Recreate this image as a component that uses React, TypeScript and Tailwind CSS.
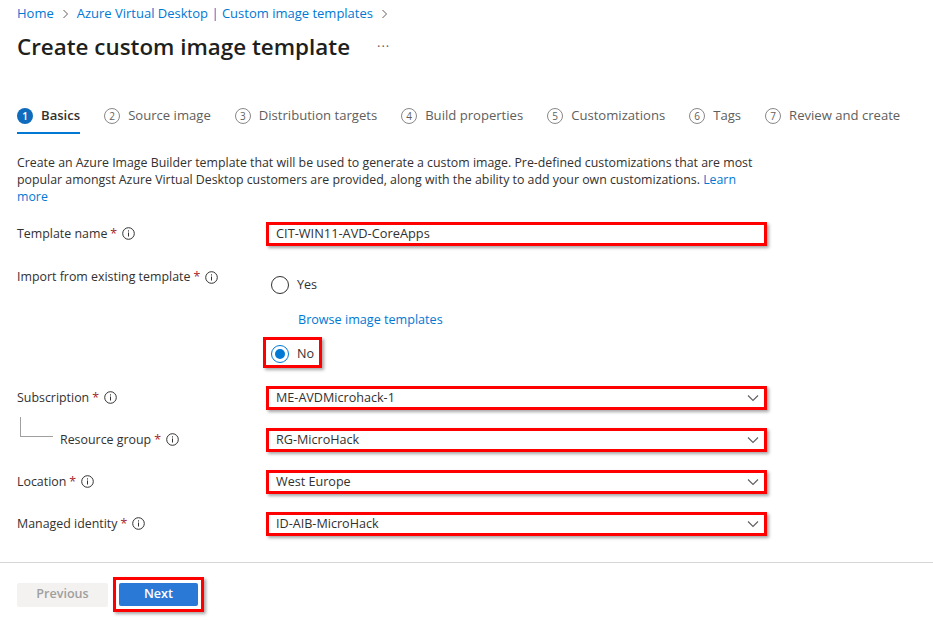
import React from "react";

const font = { fontFamily: '"Segoe UI", "Open Sans", sans-serif' };

const tabs = [
  "Basics",
  "Source image",
  "Distribution targets",
  "Build properties",
  "Customizations",
  "Tags",
  "Review and create",
];

const InfoIcon = () => (
  <svg width="13" height="13" viewBox="0 0 13 13" className="ml-[5px] shrink-0">
    <circle cx="6.5" cy="6.5" r="5.8" fill="none" stroke="#323130" strokeWidth="1" />
    <rect x="6" y="5.5" width="1" height="4" fill="#323130" />
    <rect x="6" y="3.3" width="1" height="1.2" fill="#323130" />
  </svg>
);

const Label = ({ text }: { text: string }) => (
  <div className="flex items-center whitespace-nowrap text-[12.4px] text-[#323130]">
    <span>{text}</span>
    <span className="ml-[3px] text-[#a4262c]">*</span>
    <InfoIcon />
  </div>
);

const Chevron = () => (
  <svg width="12" height="8" viewBox="0 0 12 8">
    <path d="M1 1.5 L6 6.5 L11 1.5" fill="none" stroke="#605e5c" strokeWidth="1.1" />
  </svg>
);

const Dropdown = ({ value }: { value: string }) => (
  <div className="flex h-[24px] w-[501px] items-center justify-between border-[3px] border-[#ff0000] bg-white pl-[7px] pr-[5px] text-[12.6px] text-[#323130] shadow-[2px_2px_3px_rgba(0,0,0,0.35)]">
    <span>{value}</span>
    <Chevron />
  </div>
);

const Crumb = () => (
  <svg width="7" height="10" viewBox="0 0 7 10">
    <path d="M1.5 1 L5.5 5 L1.5 9" fill="none" stroke="#605e5c" strokeWidth="1" />
  </svg>
);

export default function App() {
  return (
    <div className="min-h-[621px] w-[933px] bg-white text-[#323130]" style={font}>
      <div className="pl-[17px]">
        {/* breadcrumb */}
        <div className="mt-[6px] flex h-[16px] items-center text-[13px] text-[#0078d4]">
          <span>Home</span>
          <span className="mx-[8px]">
            <Crumb />
          </span>
          <span>Azure Virtual Desktop | Custom image templates</span>
          <span className="ml-[8px]">
            <Crumb />
          </span>
        </div>

        {/* title */}
        <div className="mt-[9px] flex h-[32px] items-center">
          <h1 className="text-[22.4px] font-semibold leading-[32px] text-[#201f1e]">
            Create custom image template
          </h1>
          <span className="ml-[27px] text-[13px] tracking-[1px] text-[#605e5c]">···</span>
        </div>

        {/* tabs */}
        <div className="mt-[41px] flex gap-[24px] whitespace-nowrap">
          {tabs.map((t, i) => (
            <div
              key={t}
              className={
                i === 0
                  ? "flex h-[30px] items-start border-b-2 border-[#0078d4] pb-[4px]"
                  : "flex h-[30px] items-start pb-[4px]"
              }
            >
              <div className="flex h-[24px] items-center">
                {i === 0 ? (
                  <span className="flex h-[16px] w-[16px] items-center justify-center rounded-full bg-[#0f6cbd] text-[10px] font-semibold text-white">
                    {i + 1}
                  </span>
                ) : (
                  <span className="flex h-[16px] w-[16px] items-center justify-center rounded-full border border-[#8a8886] text-[10px] text-[#605e5c]">
                    {i + 1}
                  </span>
                )}
                <span
                  className={
                    i === 0
                      ? "ml-[8px] text-[13.1px] font-semibold text-[#323130]"
                      : "ml-[8px] text-[13.1px] text-[#605e5c]"
                  }
                >
                  {t}
                </span>
              </div>
            </div>
          ))}
        </div>

        {/* description */}
        <div className="mt-[20px] whitespace-nowrap text-[12.35px] leading-[17px] text-[#323130]">
          <div>
            Create an Azure Image Builder template that will be used to generate a custom image.
            Pre-defined customizations that are most
          </div>
          <div>
            popular amongst Azure Virtual Desktop customers are provided, along with the ability to
            add your own customizations. <span className="text-[#0078d4]">Learn</span>
          </div>
          <div className="text-[#0078d4]">more</div>
        </div>

        {/* template name */}
        <div className="mt-[17px] flex h-[24px] items-center">
          <div className="w-[249px]">
            <Label text="Template name" />
          </div>
          <div className="flex h-[24px] w-[501px] items-center border-[3px] border-[#ff0000] bg-white pl-[7px] text-[12.8px] shadow-[2px_2px_3px_rgba(0,0,0,0.35)]">
            CIT-WIN11-AVD-CoreApps
          </div>
        </div>

        {/* import */}
        <div className="mt-[22px] flex">
          <div className="w-[249px] leading-[18px]">
            <Label text="Import from existing template" />
          </div>
          <div className="flex flex-col items-start">
            <div className="ml-[5px] mt-[7px] flex h-[20px] items-center">
              <span className="h-[18px] w-[18px] rounded-full border border-[#323130]" />
              <span className="ml-[8px] text-[12.6px]">Yes</span>
            </div>
            <div className="ml-[32px] mt-[16px] text-[12.6px] leading-[18px] text-[#0078d4]">
              Browse image templates
            </div>
            <div className="-ml-[3px] mt-[8px] flex items-center border-[3px] border-[#ff0000] pb-[2px] pl-[5px] pr-[5px] pt-[5px] shadow-[2px_2px_3px_rgba(0,0,0,0.35)]">
              <div className="flex h-[18px] items-center">
                <span className="flex h-[18px] w-[18px] items-center justify-center rounded-full border border-[#0078d4]">
                  <span className="h-[10px] w-[10px] rounded-full bg-[#0078d4]" />
                </span>
                <span className="ml-[8px] text-[12.6px]">No</span>
              </div>
            </div>
          </div>
        </div>

        {/* dropdown rows */}
        <div className="mt-[18px] flex h-[24px] items-center">
          <div className="w-[249px]">
            <Label text="Subscription" />
          </div>
          <Dropdown value="ME-AVDMicrohack-1" />
        </div>

        <div className="mt-[18px] flex h-[24px] items-center">
          <div className="relative w-[249px] pl-[43px]">
            <div className="absolute left-[3px] top-[-14px] h-[20px] w-[33px] border-b border-l border-[#a19f9d]" />
            <Label text="Resource group" />
          </div>
          <Dropdown value="RG-MicroHack" />
        </div>

        <div className="mt-[18px] flex h-[24px] items-center">
          <div className="w-[249px]">
            <Label text="Location" />
          </div>
          <Dropdown value="West Europe" />
        </div>

        <div className="mt-[18px] flex h-[24px] items-center">
          <div className="w-[249px]">
            <Label text="Managed identity" />
          </div>
          <Dropdown value="ID-AIB-MicroHack" />
        </div>
      </div>

      {/* footer */}
      <div className="mt-[26px] h-px w-full bg-[#d6d6d6]" />
      <div className="mt-[14px] flex items-center pl-[17px]">
        <div className="flex h-[24px] w-[91px] items-center justify-center rounded-[2px] bg-[#f3f2f1] text-[12.6px] font-semibold text-[#a19f9d]">
          Previous
        </div>
        <div className="ml-[5px] border-[3px] border-[#ff0000] p-[3px] shadow-[2px_2px_3px_rgba(0,0,0,0.35)]">
          <div className="flex h-[23px] w-[79px] items-center justify-center rounded-[2px] bg-[#2b79d6] text-[12.6px] font-semibold text-white">
            Next
          </div>
        </div>
      </div>
    </div>
  );
}
